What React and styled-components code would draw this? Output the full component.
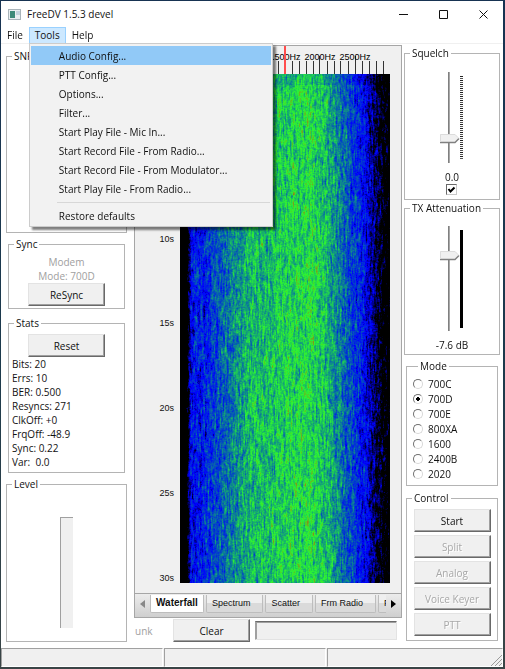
import { useEffect, useRef } from 'react';
import styled, { createGlobalStyle, css } from 'styled-components';

const GlobalStyle = createGlobalStyle`
  * {
    box-sizing: border-box;
  }
  body {
    margin: 0;
    background: linear-gradient(to bottom, #173352, #1d3a4c 55%, #3a4546);
  }
  body,
  button,
  input {
    font-family: 'Open Sans', 'Noto Sans', sans-serif;
    font-size: 10px;
    line-height: 14px;
    color: #111;
  }
`;

const Desktop = styled.div`
  min-height: 100vh;
  padding: 1px 2px 3px 1px;
  display: flex;
`;

const Window = styled.div`
  flex: 1;
  display: flex;
  flex-direction: column;
  background-color: #fff;
`;

const TitleBar = styled.header`
  display: flex;
  align-items: center;
  height: 26px;
  padding-left: 7px;
  > h1 {
    flex: 1;
    margin: 0 0 0 6px;
    font-size: 10px;
    font-weight: 400;
  }
`;

const CaptionBtn = styled.button`
  width: 40px;
  height: 24px;
  padding: 0;
  border: none;
  background: none;
  display: grid;
  place-items: center;
`;

const MenuBar = styled.nav`
  display: flex;
  height: 17px;
  border-bottom: 1px solid #f0f0f0;
`;

const MenuItem = styled.div`
  position: relative;
`;

const MenuBtn = styled.button`
  height: 17px;
  padding: 0 5px;
  border: 1px solid transparent;
  background: none;
  line-height: 15px;
  ${(props) =>
    props.$open &&
    css`
      border-color: #99d1ff;
      background-color: #cce8ff;
    `}
`;

// opened over the page, hangs from its menu button
const DropMenu = styled.div`
  position: absolute;
  z-index: 2;
  top: 100%;
  left: 0;
  width: 244px;
  padding: 2px 1px 1px;
  border: 1px solid #ccc;
  background-color: #f2f2f2;
  box-shadow: 3px 3px 2px rgba(0, 0, 0, 0.5);
  > hr {
    margin: 4px 1px 3px 26px;
    border: none;
    border-top: 1px solid #d7d7d7;
  }
`;

const DropItem = styled.button`
  display: block;
  width: 100%;
  height: 19px;
  padding: 0 0 0 28px;
  border: none;
  text-align: left;
  background-color: ${(props) => (props.$active ? '#91c9f7' : 'transparent')};
`;

const Main = styled.main`
  flex: 1;
  display: grid;
  grid-template-columns: 133px 1fr 101px;
`;

const Side = styled.div`
  display: flex;
  flex-direction: column;
  padding: ${(props) => props.$pad};
`;

const Group = styled.fieldset`
  min-width: 0;
  margin: 0 ${(props) => (props.$inset ? '2px' : '0')} ${(props) => props.$gap || 0}px;
  padding: ${(props) => props.$pad || '0'};
  border: 1px solid #b4b4b4;
  flex: ${(props) => (props.$grow ? '1 1 auto' : '0 0 auto')};
  min-height: ${(props) => props.$min || 0}px;
  display: flex;
  flex-direction: column;
  align-items: ${(props) => props.$align || 'center'};
  > legend {
    margin-left: 5px;
    padding: 0 2px;
    white-space: nowrap;
  }
`;

const Btn = styled.button`
  width: 77px;
  height: 23px;
  padding: 0;
  border: 1px solid;
  border-color: #e3e3e3 #696969 #696969 #e3e3e3;
  box-shadow: inset -1px -1px 0 #a0a0a0;
  background-color: #f0f0f0;
  &:disabled {
    color: #a8a8a8;
    text-shadow: 1px 1px 0 #fff;
  }
`;

const Muted = styled.span`
  color: #a0a0a0;
`;

const StatList = styled.ul`
  list-style: none;
  align-self: stretch;
  margin: 0;
  padding: 0 0 0 3px;
  > li {
    white-space: pre;
  }
`;

const Gauge = styled.div`
  width: 13px;
  height: 111px;
  border-top: 1px solid #a0a0a0;
  border-left: 1px solid #a0a0a0;
  background-color: #f0f0f0;
`;

const Center = styled.div`
  min-width: 0;
  display: flex;
  flex-direction: column;
`;

const Notebook = styled.section`
  margin-top: 1px;
  border: 1px solid #a6a6a6;
  background-color: #f0f0f0;
`;

const Plot = styled.div`
  display: grid;
  grid-template-columns: 45px 1fr;
  grid-template-rows: 28px 509px;
  padding: 0 11px 10px 0;
  font-family: 'Liberation Sans', sans-serif;
  font-size: 9px;
`;

const FreqAxis = styled.svg`
  grid-column: 2;
  width: 100%;
  height: 28px;
  overflow: visible;
`;

const TimeAxis = styled.div`
  display: flex;
  flex-direction: column;
  padding-right: 6px;
  > span {
    flex: 1;
    display: flex;
    align-items: flex-end;
    justify-content: flex-end;
    line-height: 10px;
  }
`;

const WaterfallCanvas = styled.canvas`
  display: block;
  width: 100%;
  height: 509px;
  image-rendering: pixelated;
`;

const TabStrip = styled.div`
  display: flex;
  height: 24px;
  padding: 1px 0 4px;
  border-top: 1px solid #a6a6a6;
  background: linear-gradient(#ececec, #cfcfcf);
`;

const Tab = styled.button`
  height: 18px;
  flex: none;
  margin-right: 2px;
  padding: 0 12px 2px 5px;
  border: 1px solid #bdbdbd;
  border-top: none;
  border-radius: 0 0 2px 2px;
  background: linear-gradient(#efefef 45%, #dadada 50%);
  font-family: 'Liberation Sans', sans-serif;
  font-size: 9px;
  text-align: left;
  ${(props) =>
    props.$active &&
    css`
      padding: 0 5px 2px;
      background: #fff;
      font-size: 10px;
      font-weight: 700;
    `}
`;

const TabClip = styled.div`
  flex: 1;
  min-width: 0;
  display: flex;
  overflow: hidden;
`;

const ArrowBtn = styled.button`
  width: 15px;
  padding: 0;
  border: none;
  background: none;
  display: grid;
  place-items: center;
`;

const BottomRow = styled.div`
  display: flex;
  align-items: center;
  padding: 1px 5px 0 1px;
`;

const Unk = styled(Muted)`
  width: 38px;
`;

const CallSign = styled.input`
  flex: 1;
  min-width: 0;
  height: 19px;
  margin-left: 5px;
  border: 1px solid;
  border-color: #696969 #e3e3e3 #e3e3e3 #a0a0a0;
  box-shadow: inset 1px 1px 0 #a0a0a0;
  background-color: #f0f0f0;
`;

const SliderRow = styled.div`
  display: flex;
  align-items: center;
  margin-bottom: 7px;
  padding-right: 2px;
`;

const thumb = `url("data:image/svg+xml,%3Csvg xmlns='http://www.w3.org/2000/svg' width='20' height='10'%3E%3Cpath d='M0 0H15L19 5L15 9H0Z' fill='%23f0f0f0'/%3E%3Cpath d='M0 8.5H15L19 4.5' fill='none' stroke='%23808080' stroke-width='1.4'/%3E%3Cpath d='M.5 8V.5H15L19 4.5' fill='none' stroke='%23dcdcdc'/%3E%3C/svg%3E")`;

const Slider = styled.input`
  appearance: none;
  writing-mode: vertical-lr;
  direction: rtl;
  width: 20px;
  height: ${(props) => props.$len}px;
  margin: 0;
  background: linear-gradient(to right, #808080 1px, #a8a8a8 1px) 8px 0 / 2px 100% no-repeat;
  &::-webkit-slider-thumb {
    appearance: none;
    width: 20px;
    height: 10px;
    background: ${thumb} no-repeat;
  }
`;

const Ticks = styled.div`
  width: 3px;
  height: ${(props) => props.$len}px;
  background: ${(props) =>
    props.$solid
      ? '#000'
      : 'repeating-linear-gradient(#222 0 1px, #fff 1px 2px, #555 2px 3px, #fff 3px 4px)'};
`;

const Check = styled.input`
  appearance: none;
  width: 11px;
  height: 11px;
  margin: 0 2px 0 0;
  border: 1px solid;
  border-color: #696969 #c8c8c8 #c8c8c8 #696969;
  background: url("data:image/svg+xml,%3Csvg xmlns='http://www.w3.org/2000/svg' width='9' height='9'%3E%3Cpath d='M1.5 4L3.5 6.5L7.5 2.5' fill='none' stroke='%23000' stroke-width='2'/%3E%3C/svg%3E")
    no-repeat;
`;

const RadioLabel = styled.label`
  display: flex;
  align-items: center;
  gap: 5px;
  height: 15px;
  > input {
    appearance: none;
    width: 10px;
    height: 10px;
    margin: 0;
    border: 1px solid;
    border-color: #707070 #d8d8d8 #d8d8d8 #707070;
    border-radius: 50%;
    background-color: #fff;
    &:checked {
      background-image: radial-gradient(circle, #000 0 2px, transparent 2px);
    }
  }
`;

const Controls = styled.div`
  display: flex;
  flex-direction: column;
  gap: 3px;
`;

const StatusBar = styled.footer`
  display: grid;
  grid-template-columns: 162px 162px 1fr;
  gap: 1px;
  height: 19px;
  background-color: #f0f0f0;
  > div {
    border: 1px solid;
    border-color: #a0a0a0 #fff #fff #a0a0a0;
    display: flex;
    align-items: flex-end;
    justify-content: flex-end;
  }
`;

const toolsMenu = [
  'Audio Config...',
  'PTT Config...',
  'Options...',
  'Filter...',
  'Start Play File - Mic In...',
  'Start Record File - From Radio...',
  'Start Record File - From Modulator...',
  'Start Play File - From Radio...',
];

const stats = [
  'Bits: 20',
  'Errs: 10',
  'BER: 0.500',
  'Resyncs: 271',
  'ClkOff: +0',
  'FrqOff: -48.9',
  'Sync: 0.22',
  'Var:  0.0',
];

const modes = ['700C', '700D', '700E', '800XA', '1600', '2400B', '2020'];

// [position in the band, mean level]
const profile = [
  [0, -0.3],
  [0.03, -0.1],
  [0.05, 0.24],
  [0.12, 0.29],
  [0.19, 0.38],
  [0.26, 0.48],
  [0.34, 0.57],
  [0.48, 0.61],
  [0.62, 0.65],
  [0.7, 0.56],
  [0.76, 0.45],
  [0.82, 0.34],
  [0.87, 0.25],
  [0.91, 0.12],
  [0.96, 0],
  [1, -0.1],
];

const level = (x) => {
  const i = Math.max(1, profile.findIndex((p) => p[0] >= x));
  const [x0, y0] = profile[i - 1];
  const [x1, y1] = profile[i];
  return y0 + ((y1 - y0) * (x - x0)) / (x1 - x0);
};

// black -> blue -> green -> red
const heat = (v) => {
  if (v < 0.22) return [0, 0, Math.max(0, v / 0.22) * 255];
  if (v < 0.69) {
    const t = (v - 0.22) / 0.47;
    return [t * t * 45, t * 245, 255 - t * 205];
  }
  const t = Math.min(1, (v - 0.69) / 0.36);
  return [45 + t * 200, 245 - t * 230, 50 - t * 50];
};

function Waterfall() {
  const ref = useRef(null);

  useEffect(() => {
    const canvas = ref.current;
    const { width, height } = canvas;
    const ctx = canvas.getContext('2d');
    const image = ctx.createImageData(width, height);
    let seed = 7001;
    const random = () => {
      seed = (seed * 1664525 + 1013904223) % 4294967296;
      return seed / 4294967296;
    };
    const trail = new Array(width).fill(0);
    for (let y = 0; y < height; y++) {
      for (let x = 0; x < width; x++) {
        // each bin keeps some of its last level, which makes the streaks
        trail[x] = trail[x] * 0.8 + (random() + random() - 1) * 0.1;
        const noise = trail[x] * 0.85 + (trail[x - 1] || 0) * 0.4;
        const v = level(x / width) + noise - (y < 11 ? 0.05 : 0);
        const [r, g, b] = heat(v);
        const i = (y * width + x) * 4;
        image.data[i] = r;
        image.data[i + 1] = g;
        image.data[i + 2] = b;
        image.data[i + 3] = 255;
      }
    }
    ctx.putImageData(image, 0, 0);
  }, []);

  return <WaterfallCanvas ref={ref} width={210} height={509} />;
}

function FrequencyAxis() {
  const ticks = Array.from({ length: 29 }, (_, i) => i + 1);
  return (
    <FreqAxis>
      {ticks.map((k) => (
        <line
          key={k}
          x1={`${(k / 30) * 100}%`}
          x2={`${(k / 30) * 100}%`}
          y1={k % 5 === 0 ? 10 : 15}
          y2='28'
          stroke='#333'
          shapeRendering='crispEdges'
        />
      ))}
      {[500, 1000, 1500, 2000, 2500].map((hz) => (
        <text key={hz} x={`${hz / 30}%`} y='14' textAnchor='middle'>
          {hz}Hz
        </text>
      ))}
      <line x1='50%' x2='50%' y1='0' y2='28' stroke='#ff4d4d' strokeWidth='2' />
    </FreqAxis>
  );
}

function App() {
  return (
    <>
      <GlobalStyle />
      <Desktop>
        <Window>
          <TitleBar>
            <svg width='13' height='11'>
              <rect x='.5' y='.5' width='12' height='10' fill='#e9eef0' stroke='#a9b4ba' />
              <rect x='2' y='2' width='5' height='7' fill='#3d8a78' />
              <rect x='8' y='2' width='4' height='4' fill='#c3d3dc' />
            </svg>
            <h1>FreeDV 1.5.3 devel</h1>
            <CaptionBtn aria-label='Minimize'>
              <svg width='9' height='9' stroke='#111'>
                <path d='M0 4.5H9' />
              </svg>
            </CaptionBtn>
            <CaptionBtn aria-label='Maximize'>
              <svg width='9' height='9' stroke='#111' fill='none'>
                <path d='M.5 .5H8.5V8.5H.5Z' />
              </svg>
            </CaptionBtn>
            <CaptionBtn aria-label='Close'>
              <svg width='9' height='9' stroke='#111'>
                <path d='M.5 .5L8.5 8.5M8.5 .5L.5 8.5' />
              </svg>
            </CaptionBtn>
          </TitleBar>

          <MenuBar>
            <MenuItem>
              <MenuBtn>File</MenuBtn>
            </MenuItem>
            <MenuItem>
              <MenuBtn $open aria-expanded='true'>
                Tools
              </MenuBtn>
              <DropMenu>
                {toolsMenu.map((item, i) => (
                  <DropItem key={item} $active={i === 0}>
                    {item}
                  </DropItem>
                ))}
                <hr />
                <DropItem>Restore defaults</DropItem>
              </DropMenu>
            </MenuItem>
            <MenuItem>
              <MenuBtn>Help</MenuBtn>
            </MenuItem>
          </MenuBar>

          <Main>
            <Side $pad='5px 7px 6px 5px'>
              <Group $min={184} $gap={4}>
                <legend>SNR</legend>
              </Group>
              <Group $inset $gap={7} $pad='4px 0 2px'>
                <legend>Sync</legend>
                <Muted>Modem</Muted>
                <Muted>Mode: 700D</Muted>
                <Btn>ReSync</Btn>
              </Group>
              <Group $inset $gap={4} $pad='4px 0 3px'>
                <legend>Stats</legend>
                <Btn>Reset</Btn>
                <StatList>
                  {stats.map((stat) => (
                    <li key={stat}>{stat}</li>
                  ))}
                </StatList>
              </Group>
              <Group $grow $pad='26px 0 12px'>
                <legend>Level</legend>
                <Gauge />
              </Group>
            </Side>

            <Center>
              <Notebook>
                <Plot>
                  <FrequencyAxis />
                  <TimeAxis>
                    {[5, 10, 15, 20, 25, 30].map((s) => (
                      <span key={s}>{s}s</span>
                    ))}
                  </TimeAxis>
                  <Waterfall />
                </Plot>
                <TabStrip>
                  <ArrowBtn aria-label='Previous tabs'>
                    <svg width='5' height='8'>
                      <path d='M5 0V8L0 4Z' fill='#888' />
                    </svg>
                  </ArrowBtn>
                  <TabClip>
                    <Tab $active>Waterfall</Tab>
                    <Tab>Spectrum</Tab>
                    <Tab>Scatter</Tab>
                    <Tab>Frm Radio</Tab>
                    <Tab>Frm Mic</Tab>
                  </TabClip>
                  <ArrowBtn aria-label='Next tabs'>
                    <svg width='5' height='8'>
                      <path d='M0 0V8L5 4Z' fill='#000' />
                    </svg>
                  </ArrowBtn>
                </TabStrip>
              </Notebook>
              <BottomRow>
                <Unk>unk</Unk>
                <Btn>Clear</Btn>
                <CallSign aria-label='Call sign' />
              </BottomRow>
            </Center>

            <Side $pad='2px 3px 7px 2px'>
              <Group $gap={1} $pad='12px 0 4px'>
                <legend>Squelch</legend>
                <SliderRow>
                  <Slider type='range' $len={91} defaultValue={24} aria-label='Squelch level' />
                  <Ticks $len={84} />
                </SliderRow>
                <label htmlFor='squelch'>0.0</label>
                <Check id='squelch' type='checkbox' defaultChecked />
              </Group>
              <Group $gap={4} $pad='11px 0 2px'>
                <legend>TX Attenuation</legend>
                <SliderRow>
                  <Slider type='range' $len={105} defaultValue={74} aria-label='TX attenuation' />
                  <Ticks $solid $len={98} />
                </SliderRow>
                <span>-7.6 dB</span>
              </Group>
              <Group $inset $gap={5} $pad='3px 0 4px 6px' $align='flex-start'>
                <legend>Mode</legend>
                {modes.map((mode) => (
                  <RadioLabel key={mode}>
                    <input type='radio' name='mode' defaultChecked={mode === '700D'} />
                    {mode}
                  </RadioLabel>
                ))}
              </Group>
              <Group $inset $pad='4px 0'>
                <legend>Control</legend>
                <Controls>
                  <Btn>Start</Btn>
                  <Btn disabled>Split</Btn>
                  <Btn disabled>Analog</Btn>
                  <Btn disabled>Voice Keyer</Btn>
                  <Btn disabled>PTT</Btn>
                </Controls>
              </Group>
            </Side>
          </Main>

          <StatusBar>
            <div />
            <div />
            <div>
              <svg width='12' height='12' stroke='#9a9a9a'>
                <path d='M1 12L12 1M5 12L12 5M9 12L12 9' />
              </svg>
            </div>
          </StatusBar>
        </Window>
      </Desktop>
    </>
  );
}

export default App;
